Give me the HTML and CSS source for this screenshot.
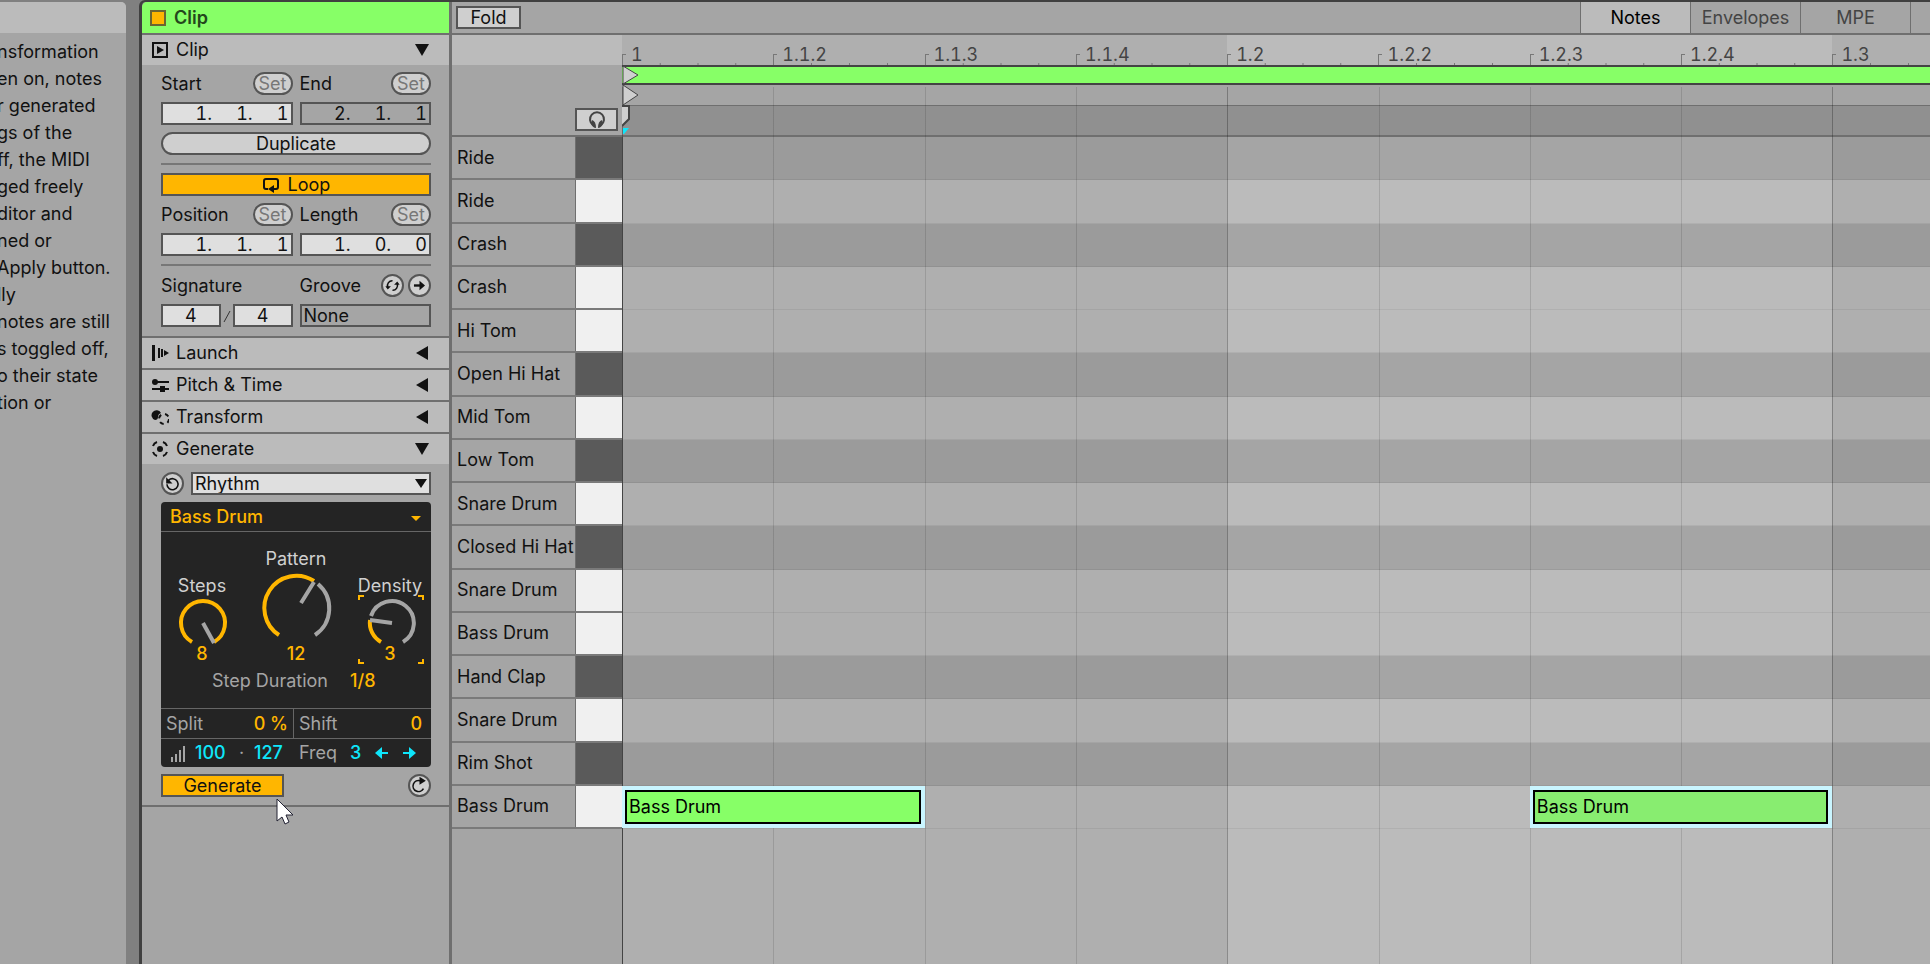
FILE: index.html
```
<!DOCTYPE html>
<html lang="en">
<head>
  <meta charset="utf-8">
  <title>Clip View</title>
  <link rel="stylesheet" href="styles.css">
</head>
<body>
  <aside class="info">
    <div class="info-header"></div>
    <p class="info-text">
      nsformation<br>
      en on, notes<br>
      r generated<br>
      gs of the<br>
      ff, the MIDI<br>
      ged freely<br>
      ditor and<br>
      ned or<br>
      Apply button.<br>
      lly<br>
      notes are still<br>
      s toggled off,<br>
      o their state<br>
      tion or
    </p>
  </aside>

  <main class="clip-view">
    <section class="clip-panel">
      <label class="clip-title">
        <input type="checkbox" class="clip-toggle" checked>
        Clip
      </label>

      <button class="section-header open">
        <svg class="icon" viewBox="0 0 18 18"><path d="M2 2h14v14H2z" fill="none" stroke="#111" stroke-width="2"/><path d="M6 5l7 4-7 4z" fill="#111"/></svg>
        <span>Clip</span>
        <svg class="arrow" viewBox="0 0 14 14"><path d="M0 1h14L7 13z" fill="#111"/></svg>
      </button>
      <div class="clip-controls">
        <div class="pair">
          <div class="field-head"><label for="start">Start</label><button class="pill">Set</button></div>
          <div class="field-head"><label for="end">End</label><button class="pill">Set</button></div>
        </div>
        <div class="pair">
          <input id="start" class="field time" value="1.&nbsp;&nbsp;&nbsp;&nbsp; 1.&nbsp;&nbsp;&nbsp;&nbsp; 1">
          <input id="end" class="field time off" value="2.&nbsp;&nbsp;&nbsp;&nbsp; 1.&nbsp;&nbsp;&nbsp;&nbsp; 1">
        </div>
        <button class="pill">Duplicate</button>
        <hr>
        <button class="field lit">
          <svg class="loop-icon" viewBox="0 0 18 16"><path d="M6 12H4Q2 12 2 10V4Q2 2 4 2h10q2 0 2 2v6q0 2-2 2h-2" fill="none" stroke="#111" stroke-width="2"/><path d="M12 8v8l-6-4z" fill="#111"/></svg>
          Loop
        </button>
        <div class="pair">
          <div class="field-head"><label for="position">Position</label><button class="pill">Set</button></div>
          <div class="field-head"><label for="length">Length</label><button class="pill">Set</button></div>
        </div>
        <div class="pair">
          <input id="position" class="field time" value="1.&nbsp;&nbsp;&nbsp;&nbsp; 1.&nbsp;&nbsp;&nbsp;&nbsp; 1">
          <input id="length" class="field time" value="1.&nbsp;&nbsp;&nbsp;&nbsp; 0.&nbsp;&nbsp;&nbsp;&nbsp; 0">
        </div>
        <hr>
        <div class="pair">
          <div class="field-head"><label for="numerator">Signature</label></div>
          <div class="field-head">
            <label for="groove">Groove</label>
            <span class="round-group">
              <button class="round" aria-label="Hot-swap groove"><svg viewBox="0 0 24 24"><path d="M6 14a6 6 0 0 1 6-8M18 10a6 6 0 0 1-6 8" fill="none" stroke="#111" stroke-width="2"/><path d="M3 13h7l-4 4zM21 11h-7l4-4z" fill="#111"/></svg></button>
              <button class="round" aria-label="Commit groove"><svg viewBox="0 0 24 24"><path d="M5 12h9" stroke="#111" stroke-width="3"/><path d="M12 6l7 6-7 6z" fill="#111"/></svg></button>
            </span>
          </div>
        </div>
        <div class="pair">
          <div class="signature">
            <input id="numerator" class="field" value="4">
            <svg class="slash" viewBox="0 0 12 14"><path d="M3 13L9 2" stroke="#333" stroke-width="1"/></svg>
            <input class="field" value="4" aria-label="Denominator">
          </div>
          <select id="groove" class="field off"><option>None</option></select>
        </div>
      </div>

      <button class="section-header">
        <svg class="icon" viewBox="0 0 18 18"><path d="M1 1h3v16H1zM7 4h2v10H7zM10 5h2v8h-2zM13 6l5 3-5 3z" fill="#111"/></svg>
        <span>Launch</span>
        <svg class="arrow" viewBox="0 0 14 14"><path d="M13 0v14L1 7z" fill="#111"/></svg>
      </button>
      <button class="section-header">
        <svg class="icon" viewBox="0 0 18 18"><path d="M2 6h16M1 13h17" stroke="#111" stroke-width="2"/><circle cx="4" cy="6" r="3" fill="#111"/><path d="M9 10h5v6H9z" fill="#111"/></svg>
        <span>Pitch &amp; Time</span>
        <svg class="arrow" viewBox="0 0 14 14"><path d="M13 0v14L1 7z" fill="#111"/></svg>
      </button>
      <button class="section-header">
        <svg class="icon" viewBox="0 0 18 18"><path d="M10 5a5 5 0 1 0-6 7q3 0 3-3 0-3 3-4z" fill="#111"/><circle cx="13" cy="11" r="5" fill="none" stroke="#111" stroke-width="2" stroke-dasharray="4 4"/></svg>
        <span>Transform</span>
        <svg class="arrow" viewBox="0 0 14 14"><path d="M13 0v14L1 7z" fill="#111"/></svg>
      </button>
      <button class="section-header open">
        <svg class="icon" viewBox="0 0 18 18"><circle cx="9" cy="9" r="3" fill="#111"/><path d="M2 6q1-3 4-4M12 2q3 1 4 4M16 12q-1 3-4 4M6 16q-3-1-4-4" fill="none" stroke="#111" stroke-width="2"/></svg>
        <span>Generate</span>
        <svg class="arrow" viewBox="0 0 14 14"><path d="M0 1h14L7 13z" fill="#111"/></svg>
      </button>

      <div class="generator">
        <div class="generator-head">
          <button class="round" aria-label="Reset"><svg viewBox="0 0 24 24"><path d="M7 8a7 7 0 1 1-2 5" fill="none" stroke="#111" stroke-width="2"/><path d="M4 4v8h8z" fill="#111"/></svg></button>
          <div class="dropdown">
            <select class="field" aria-label="Generator"><option>Rhythm</option></select>
            <svg viewBox="0 0 14 12"><path d="M1 1h12L7 10z" fill="#111"/></svg>
          </div>
        </div>

        <div class="device">
          <div class="dropdown device-pitch">
            <select aria-label="Pitch"><option>Bass Drum</option></select>
            <svg viewBox="0 0 14 12"><path d="M2 4h10L7 9z" fill="#ffb600"/></svg>
          </div>

          <div class="device-main">
            <div class="knobs">
              <div class="knob">
                <label for="steps">Steps</label>
                <svg viewBox="0 0 80 48" width="80" height="48">
                  <path class="dial-on" d="M30 45A22 22 0 1 1 52 45"/>
                  <path class="dial-off" d="M41 26l11 20"/>
                </svg>
                <input id="steps" value="8">
              </div>
              <div class="knob">
                <label for="pattern">Pattern</label>
                <svg viewBox="0 0 80 75" width="80" height="75">
                  <path class="dial-on" d="M23 65A32 32 0 1 1 58 11"/>
                  <path class="dial-off" d="M62 14A32 32 0 0 1 59 65M58 12L45 33"/>
                </svg>
                <input id="pattern" value="12">
              </div>
              <div class="knob selected">
                <label for="density">Density</label>
                <svg viewBox="0 0 80 48" width="80" height="48">
                  <path class="dial-on" d="M31 45A22 22 0 0 1 20 23"/>
                  <path class="dial-off" d="M21 19A22 22 0 1 1 53 45M42 26l-22-3"/>
                </svg>
                <input id="density" value="3">
                <svg class="brackets" viewBox="0 0 66 69"><path d="M1 5V1h5M60 1h5v4M1 64v4h5M60 68h5v-4" fill="none" stroke="#ffb600" stroke-width="2"/></svg>
              </div>
            </div>
            <div class="step-duration">
              <label for="duration">Step Duration</label>
              <input id="duration" value="1/8">
            </div>
          </div>

          <div class="device-row">
            <div class="device-cell"><label for="split">Split</label><input id="split" value="0 %"></div>
            <div class="device-cell"><label for="shift">Shift</label><input id="shift" value="0"></div>
          </div>
          <div class="device-row velocity">
            <div class="velocity-range">
              <svg class="bars" viewBox="0 0 14 17" width="14" height="17"><path d="M1 17v-5M5 17V9M9 17V5M13 17V1" stroke="#a5a5a5" stroke-width="2"/></svg>
              <input value="100" aria-label="Velocity">
              <span>·</span>
              <input value="127" aria-label="Velocity range">
            </div>
            <div class="frequency">
              <label for="freq">Freq</label>
              <input id="freq" value="3">
              <button aria-label="Shift left"><svg viewBox="0 0 14 12"><path d="M13 6H5" stroke="#0ee6fb" stroke-width="2"/><path d="M7 0v12L0 6z" fill="#0ee6fb"/></svg></button>
              <button aria-label="Shift right"><svg viewBox="0 0 14 12"><path d="M1 6h8" stroke="#0ee6fb" stroke-width="2"/><path d="M7 0v12l7-6z" fill="#0ee6fb"/></svg></button>
            </div>
          </div>
        </div>

        <div class="generator-foot">
          <button class="field lit generate">Generate</button>
          <button class="round" aria-label="Auto apply"><svg viewBox="0 0 24 24"><path d="M17 16a7 7 0 1 1-4-10" fill="none" stroke="#111" stroke-width="2"/><path d="M12 1v10l8-5z" fill="#111"/></svg></button>
        </div>
      </div>
    </section>

    <section class="editor">
      <div class="toolbar">
        <button class="field fold">Fold</button>
        <nav class="tabs">
          <button class="tab active">Notes</button>
          <button class="tab">Envelopes</button>
          <button class="tab">MPE</button>
          <span class="tab-end"></span>
        </nav>
      </div>

      <div class="roll">
        <div class="keys">
          <div class="keys-top"></div>
          <div class="keys-tools">
            <button class="field preview" aria-label="Preview"><svg viewBox="0 0 18 18"><path d="M5 14A7 7 0 1 1 13 14" fill="none" stroke="#444" stroke-width="2"/><path d="M4 9q4 1 4 8-3 0-5-4zM14 9q-4 1-4 8 3 0 5-4z" fill="#444"/></svg></button>
          </div>
          <div class="rows">
            <button class="pad black">Ride</button>
            <button class="pad">Ride</button>
            <button class="pad black">Crash</button>
            <button class="pad">Crash</button>
            <button class="pad">Hi Tom</button>
            <button class="pad black">Open Hi Hat</button>
            <button class="pad">Mid Tom</button>
            <button class="pad black">Low Tom</button>
            <button class="pad">Snare Drum</button>
            <button class="pad black">Closed Hi Hat</button>
            <button class="pad">Snare Drum</button>
            <button class="pad">Bass Drum</button>
            <button class="pad black">Hand Clap</button>
            <button class="pad">Snare Drum</button>
            <button class="pad black">Rim Shot</button>
            <button class="pad">Bass Drum</button>
          </div>
        </div>

        <div class="timeline">
          <div class="ruler">
            <span class="beat">1</span>
            <span class="beat">1.1.2</span>
            <span class="beat">1.1.3</span>
            <span class="beat">1.1.4</span>
            <span class="beat">1.2</span>
            <span class="beat">1.2.2</span>
            <span class="beat">1.2.3</span>
            <span class="beat">1.2.4</span>
            <span class="beat">1.3</span>
          </div>
          <div class="loop-bar"></div>
          <div class="marker-bar"></div>
          <div class="scrub-bar"></div>
          <svg class="markers" viewBox="0 0 18 70" width="18" height="70">
            <path d="M1 1v18l15-9zM1 20v20l15-10z" fill="#cfcfcf" stroke="#444" stroke-width="1"/>
            <path d="M0 41h7v13l-7 7z" fill="#cfcfcf"/>
            <path d="M0 41h7v13l-7 7" fill="none" stroke="#444" stroke-width="2"/>
            <path d="M1 63h6l-5 6H1z" fill="#0ee6fb"/>
          </svg>
          <div class="rows lanes">
            <div class="lane black"></div>
            <div class="lane"></div>
            <div class="lane black"></div>
            <div class="lane"></div>
            <div class="lane"></div>
            <div class="lane black"></div>
            <div class="lane"></div>
            <div class="lane black"></div>
            <div class="lane"></div>
            <div class="lane black"></div>
            <div class="lane"></div>
            <div class="lane"></div>
            <div class="lane black"></div>
            <div class="lane"></div>
            <div class="lane black"></div>
            <div class="lane">
              <div class="note at-beat-1"><span>Bass Drum</span></div>
              <div class="note at-beat-7 soft"><span>Bass Drum</span></div>
            </div>
          </div>
        </div>
      </div>
    </section>
  </main>

  <svg class="cursor" viewBox="0 0 18 27" width="18" height="27"><path d="M1 1v22l5-4 3 7 4-2-3-7h7z" fill="#fff" stroke="#223" stroke-width="1"/></svg>
</body>
</html>
```
FILE: styles.css
```
:root {
  --beat: 7.84vw;
  --panel: #a5a5a5;
  --header: #bbbbbb;
  --line: #6f6f6f;
  --edge: #404040;
  --field-border: #555555;
  --orange: #ffb600;
  --green: #87ff67;
  --cyan: #0ee6fb;
}
* {
  box-sizing: border-box;
}
body {
  margin: 0;
  height: 100vh;
  display: flex;
  gap: 13px;
  overflow: hidden;
  background: #808080;
  color: #111;
  font-family: Inter, sans-serif;
  font-size: 18px;
  line-height: 22px;
}
button, input, select {
  margin: 0;
  padding: 0;
  border: none;
  border-radius: 0;
  background: none;
  color: inherit;
  font: inherit;
  min-width: 0;
}
select {
  appearance: none;
}
svg {
  display: block;
  flex: none;
}

/* info box */
.info {
  flex: 0 0 126px;
  margin-top: 2px;
  overflow: hidden;
  background: var(--panel);
  border-top-right-radius: 5px;
}
.info-header {
  height: 31px;
  background: var(--header);
}
.info-text {
  margin: 5px 0 0 -3px;
  line-height: 27px;
  white-space: nowrap;
}

.clip-view {
  flex: 1;
  min-width: 0;
  display: flex;
  border: solid var(--edge);
  border-width: 2px 0 0 3px;
  border-top-left-radius: 6px;
  background: var(--line);
  gap: 3px;
}

/* clip panel */
.clip-panel {
  flex: 0 0 307px;
  display: flex;
  flex-direction: column;
  background: var(--panel);
  border-top-left-radius: 5px;
  overflow: hidden;
}
.clip-title {
  display: flex;
  align-items: center;
  gap: 8px;
  height: 31px;
  padding-left: 8px;
  background: var(--green);
  color: #24471c;
  font-weight: 600;
}
.clip-toggle {
  appearance: none;
  width: 16px;
  height: 16px;
  border: 2px solid #6b6532;
  background: var(--orange);
}
.section-header {
  display: flex;
  align-items: center;
  gap: 7px;
  height: 32px;
  padding: 0 20px 0 9px;
  border-top: 2px solid var(--line);
  background: var(--header);
  text-align: left;
}
.section-header span {
  flex: 1;
}
.icon {
  width: 18px;
  height: 18px;
}
.arrow {
  width: 14px;
  height: 14px;
}
.clip-controls {
  display: flex;
  flex-direction: column;
  gap: 7px;
  padding: 7px 18px 9px 19px;
}
.clip-controls hr {
  width: 100%;
  height: 2px;
  margin: 1px 0;
  border: none;
  background: #777;
}
.pair {
  display: grid;
  grid-template-columns: 1fr 1fr;
  gap: 7px;
}
.field-head {
  display: flex;
  align-items: center;
  justify-content: space-between;
  height: 23px;
}
.pill {
  height: 23px;
  padding: 0 4px;
  border: 2px solid var(--field-border);
  border-radius: 12px;
  background: #cfcfcf;
  line-height: 19px;
}
.field-head .pill {
  color: #777;
}
.field {
  height: 23px;
  border: 2px solid var(--field-border);
  background: #dfdfdf;
  line-height: 19px;
}
.field.time {
  width: 100%;
  padding-right: 2px;
  text-align: right;
  font-variant-numeric: tabular-nums;
}
.field.off {
  background: var(--panel);
}
.field.lit {
  background: var(--orange);
}
select.field {
  padding-left: 2px;
}
.clip-controls .lit {
  display: flex;
  align-items: center;
  justify-content: center;
  gap: 8px;
}
.loop-icon {
  width: 18px;
  height: 16px;
}
.round {
  width: 23px;
  height: 23px;
  border: 2px solid var(--field-border);
  border-radius: 50%;
  background: #cfcfcf;
}
.round svg {
  width: 19px;
  height: 19px;
}
.round-group {
  display: flex;
  gap: 4px;
}
.signature {
  display: flex;
  align-items: center;
}
.signature .field {
  flex: 1;
  width: 0;
  text-align: center;
}
.slash {
  width: 12px;
  height: 14px;
}

/* generator */
.generator {
  display: flex;
  flex-direction: column;
  gap: 7px;
  padding: 8px 18px 8px 19px;
  border-bottom: 2px solid var(--line);
}
.generator-head {
  display: flex;
  gap: 7px;
}
.dropdown {
  position: relative;
  flex: 1;
}
.dropdown select {
  width: 100%;
}
.dropdown svg {
  position: absolute;
  right: 3px;
  top: 6px;
  width: 14px;
  height: 12px;
  pointer-events: none;
}
.device {
  border-radius: 4px;
  overflow: hidden;
  background: #242424;
  color: #a5a5a5;
}
.device input,
.device select {
  color: var(--orange);
  font-weight: 500;
}
.device-pitch select {
  height: 29px;
  padding-left: 9px;
}
.device-pitch svg {
  top: 10px;
  right: 8px;
}
.device-main {
  padding: 16px 0;
  border: solid #666;
  border-width: 1px 0;
}
.knobs {
  display: flex;
  align-items: flex-end;
  justify-content: space-between;
}
.knob {
  position: relative;
  display: flex;
  flex-direction: column;
  align-items: center;
  width: 82px;
  color: #d0d0d0;
}
.knob input {
  width: 40px;
  height: 17px;
  text-align: center;
}
.dial-on,
.dial-off {
  fill: none;
  stroke: var(--orange);
  stroke-width: 4;
}
.dial-off {
  stroke: #a5a5a5;
}
.brackets {
  position: absolute;
  left: 9px;
  bottom: -2px;
  width: 66px;
  height: 69px;
  pointer-events: none;
}
.step-duration {
  display: flex;
  justify-content: center;
  gap: 22px;
  margin-top: 8px;
  padding-left: 10px;
}
.step-duration input {
  width: 40px;
}
.device-row {
  display: grid;
  grid-template-columns: 132px 1fr;
  height: 29px;
}
.device-cell {
  display: flex;
  align-items: center;
  justify-content: space-between;
  padding: 0 5px;
}
.device-cell + .device-cell {
  border-left: 1px solid #666;
  padding-right: 9px;
}
.device-cell input {
  width: 60px;
  text-align: right;
}
.velocity {
  border-top: 1px solid #666;
}
.velocity-range,
.frequency {
  display: flex;
  align-items: center;
  justify-content: space-between;
  padding: 0 5px 0 10px;
}
.frequency {
  padding: 0 15px 0 6px;
}
.velocity input {
  width: 34px;
  color: var(--cyan);
}
.frequency input {
  width: 12px;
}
.frequency svg {
  width: 14px;
  height: 12px;
}
.generator-foot {
  display: flex;
  justify-content: space-between;
}
.generate {
  width: 123px;
}

/* editor */
.editor {
  flex: 1;
  min-width: 0;
  display: flex;
  flex-direction: column;
  background: var(--panel);
}
.toolbar {
  display: flex;
  align-items: center;
  justify-content: space-between;
  height: 33px;
  padding-left: 4px;
  border-bottom: 2px solid var(--line);
}
.fold {
  width: 65px;
  background: #cfcfcf;
}
.tabs {
  display: flex;
  align-self: stretch;
}
.tab {
  width: 110px;
  border-left: 1px solid var(--line);
  color: #444;
}
.tab.active {
  background: var(--header);
  color: #000;
}
.tab-end {
  width: 20px;
  border-left: 1px solid var(--line);
}
.roll {
  flex: 1;
  display: flex;
}
.keys {
  flex: 0 0 170px;
}
.keys-top {
  height: 30px;
  background: var(--header);
}
.keys-tools {
  display: flex;
  align-items: flex-end;
  justify-content: flex-end;
  height: 72px;
  padding: 0 4px 4px 0;
  border-bottom: 2px solid var(--line);
}
.preview {
  display: flex;
  align-items: center;
  justify-content: center;
  width: 43px;
  background: #cfcfcf;
}
.preview svg {
  width: 18px;
  height: 18px;
}
.rows {
  display: grid;
  grid-template-rows: repeat(16, 1fr);
  height: 692px;
}
.pad {
  padding-left: 5px;
  border-bottom: 2px solid #7a7a7a;
  background: linear-gradient(90deg, var(--panel) 0 123px, var(--line) 0 124px, #f0f0f0 0);
  text-align: left;
  white-space: nowrap;
}
.pad.black {
  background: linear-gradient(90deg, var(--panel) 0 123px, var(--line) 0 124px, #5a5a5a 0);
}

.timeline {
  position: relative;
  flex: 1;
  min-width: 0;
  overflow: hidden;
  background: linear-gradient(90deg, #afafaf 0 calc(var(--beat) * 4), var(--header) 0 calc(var(--beat) * 8), #afafaf 0);
}
/* beat lines, a stronger one on every fourth beat */
.timeline::after {
  content: "";
  position: absolute;
  inset: 52px 0 0;
  pointer-events: none;
  background:
    linear-gradient(#444, #444) 0 50px / 1px 100% no-repeat,
    repeating-linear-gradient(90deg, rgba(0, 0, 0, .16) 0 1px, transparent 1px calc(var(--beat) * 4)),
    repeating-linear-gradient(90deg, rgba(0, 0, 0, .12) 0 1px, transparent 1px var(--beat));
}
.ruler {
  display: flex;
  height: 30px;
}
.beat {
  flex: 0 0 var(--beat);
  padding: 9px 0 0 9px;
  color: #444;
  font-kerning: none;
  font-variant-numeric: tabular-nums;
  background:
    linear-gradient(#777, #777) 0 100% / 1px 11px no-repeat,
    linear-gradient(#777, #777) 0 19px / 4px 1px no-repeat,
    linear-gradient(90deg, #777 1px, transparent 1px) 0 100% / 25% 2px repeat-x;
}
.loop-bar {
  height: 20px;
  border: solid #444;
  border-width: 2px 0;
  background: var(--green);
}
.marker-bar {
  height: 21px;
  border-bottom: 1px solid var(--line);
  background: var(--panel);
}
.scrub-bar {
  height: 31px;
  border-bottom: 2px solid var(--line);
  background: #909090;
}
.markers {
  position: absolute;
  left: 0;
  top: 30px;
  z-index: 1;
}
.lane {
  position: relative;
  border-bottom: 1px solid rgba(0, 0, 0, .06);
}
.lane.black {
  background: rgba(0, 0, 0, .115);
}
.note {
  position: absolute;
  top: 0;
  bottom: 0;
  z-index: 1;
  width: calc(var(--beat) * 2);
  border: solid #c9f5ff;
  border-width: 4px 4px 4px 3px;
}
.note span {
  display: flex;
  align-items: center;
  height: 100%;
  padding-left: 2px;
  border: 2px solid #000;
  background: var(--green);
  color: #000;
}
.note.soft span {
  background: #88ed70;
}
.at-beat-1 {
  left: 0;
}
.at-beat-7 {
  left: calc(var(--beat) * 6);
}

.cursor {
  position: absolute;
  left: 276px;
  top: 798px;
}
```
